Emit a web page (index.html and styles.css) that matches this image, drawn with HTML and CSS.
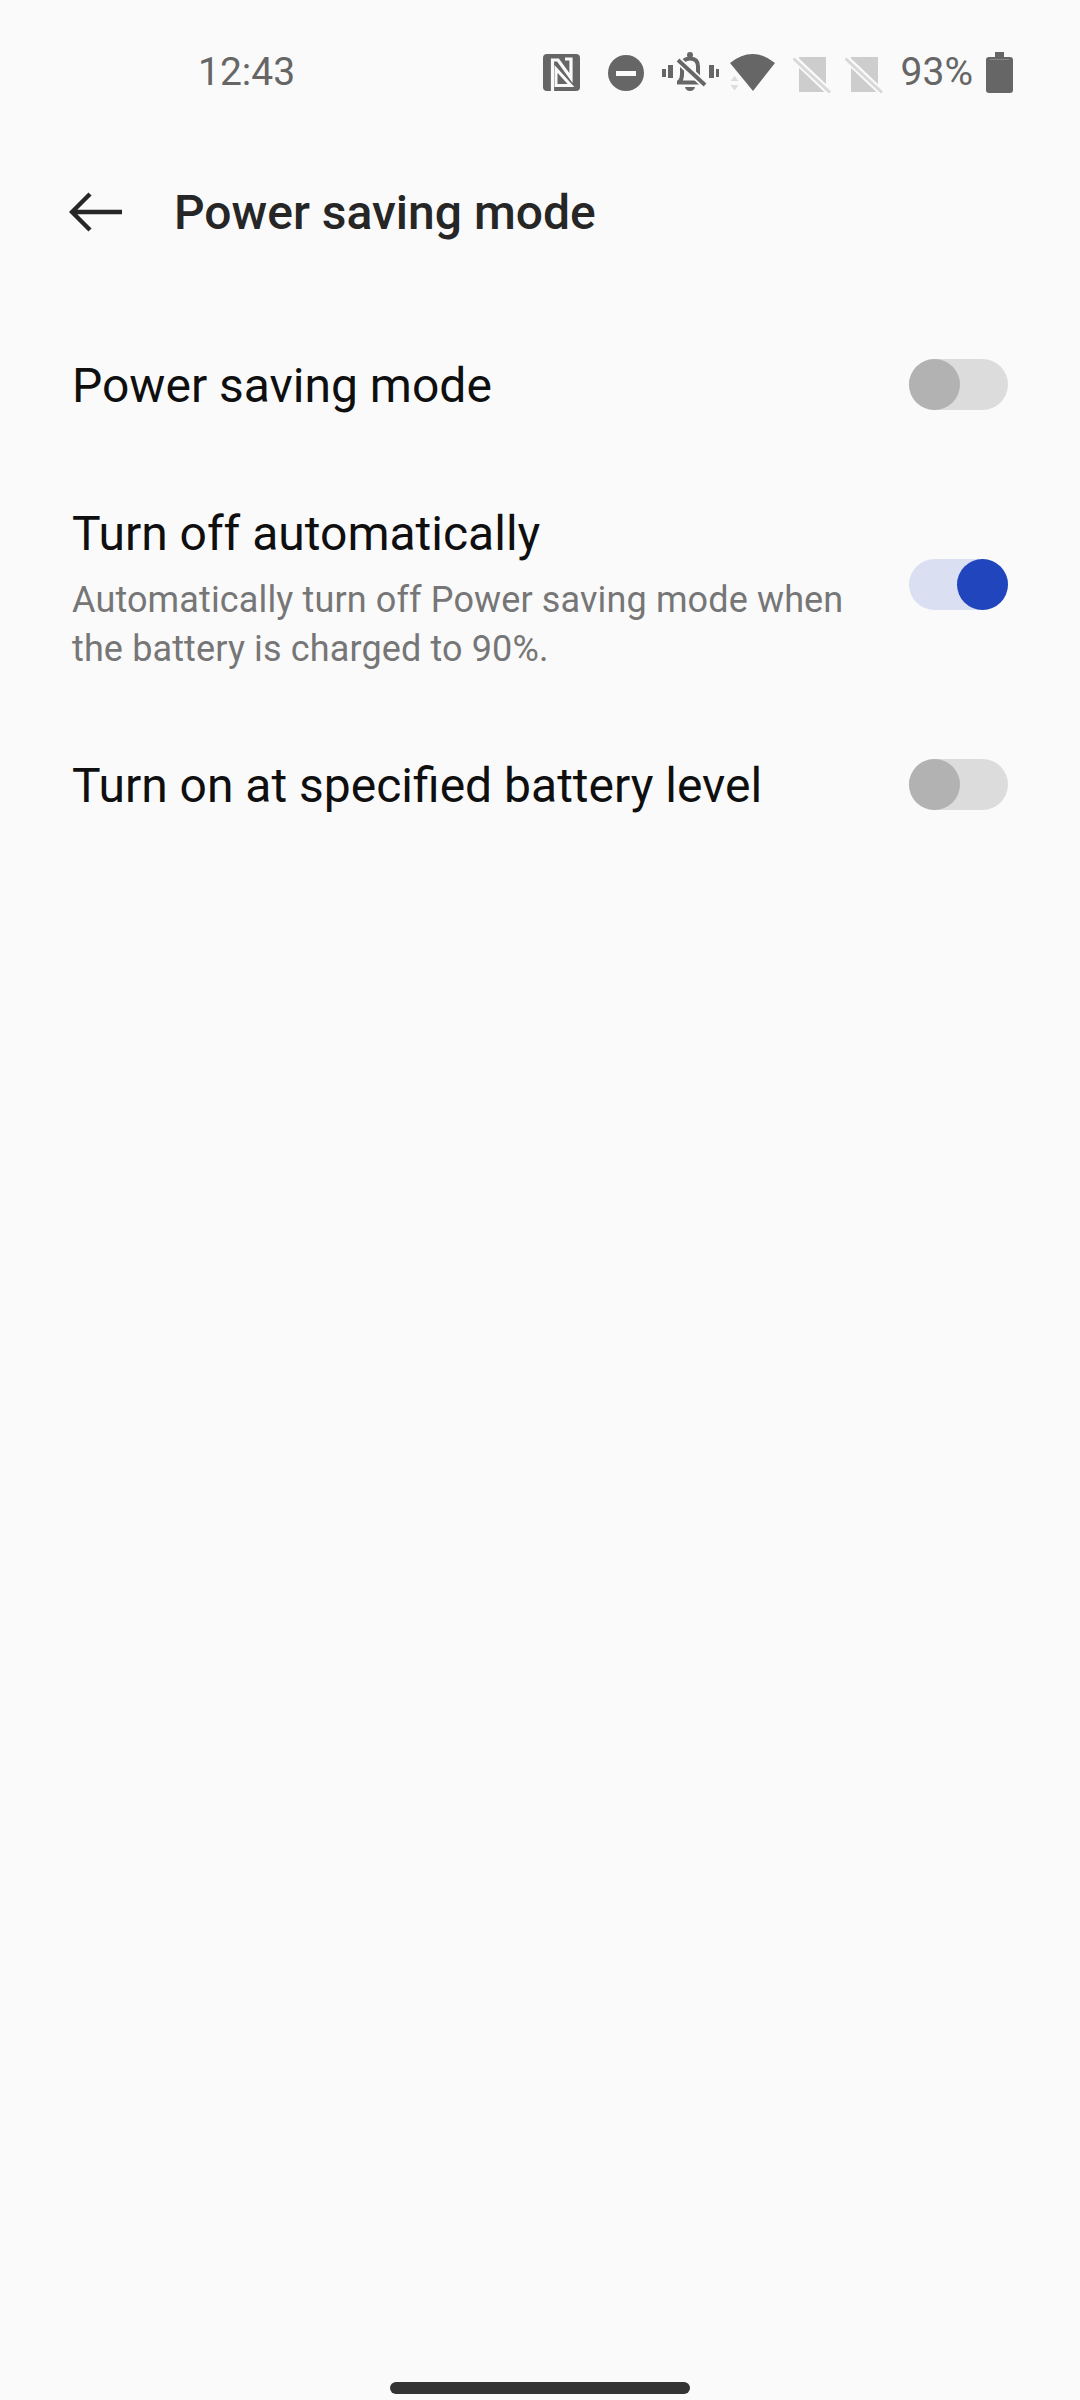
FILE: index.html
```html
<!DOCTYPE html>
<html lang="en">
<head>
<meta charset="utf-8">
<title>Power saving mode</title>
<link rel="stylesheet" href="styles.css">
</head>
<body>
<div class="screen">
  <header class="status">
    <span class="time">12:43</span>
    <div class="status-icons">
      <svg class="ic nfc" viewBox="0 -2 37 42"><rect width="37" height="37" rx="4" fill="#666"/><path d="M9.500 37V6H15L28 24V5H22" fill="none" stroke="#fafafa" stroke-width="3.200"/><path d="M13 15V31.500H28Z" fill="none" stroke="#fafafa" stroke-width="3"/></svg>
      <svg class="ic dnd" viewBox="0 -3 36 42"><circle cx="18" cy="18" r="18" fill="#666"/><rect x="8" y="16" width="20" height="5" fill="#fafafa"/></svg>
      <svg class="ic bell" viewBox="0 0 57 42"><g fill="#666"><rect x="0" y="17" width="4" height="8"/><rect x="6" y="13" width="5" height="13"/><rect x="47" y="13" width="5" height="13"/><rect x="54" y="17" width="3" height="8"/><path d="M23 35h10q-1 4-5 4t-5-4z"/><circle cx="28" cy="3" r="3"/></g><path d="M15 30.500h2q3-3 3-8v-8q0-8 8-8t8 8v8q0 5 5 8h1H15" fill="none" stroke="#666" stroke-width="4"/><path d="M16 8L43 33" stroke="#fafafa" stroke-width="7.500"/><path d="M16 8L43 33" stroke="#666" stroke-width="3.800"/></svg>
      <svg class="ic wifi" viewBox="0 -2 45 42"><path fill="#666" d="M0 9Q22.500-9 45 9L23 37Z"/><path fill="#dcdcdc" d="M0.500 27L4.500 22L8.500 27ZM0.500 31L4.500 36.500L8.500 31Z"/></svg>
      <svg class="ic sim" viewBox="0 -4 38 42"><path fill="#cdcdcd" d="M6 1H33V36H6Z"/><path d="M0 1.500L37 36.500" stroke="#fafafa" stroke-width="7"/><path d="M0.500 2.500L37 36.500" stroke="#d8d8d8" stroke-width="3"/></svg>
      <svg class="ic sim sim-last" viewBox="0 -4 38 42"><path fill="#cdcdcd" d="M6 1H33V36H6Z"/><path d="M0 1.500L37 36.500" stroke="#fafafa" stroke-width="7"/><path d="M0.500 2.500L37 36.500" stroke="#d8d8d8" stroke-width="3"/></svg>
      <span class="pct">93%</span>
      <svg class="ic batt" viewBox="0 0 27 42"><path fill="#666" d="M9 0H18V5H24Q27 5 27 8V38Q27 41 24 41H3Q0 41 0 38V8Q0 5 3 5H9Z"/><rect x="4" y="7" width="19" height="1" fill="#888"/></svg>
    </div>
  </header>

  <nav class="appbar">
    <svg class="back" viewBox="0 0 54 40"><path d="M53 20H3M21 2L3 20L21 38" fill="none" stroke="#262626" stroke-width="4.400"/></svg>
    <h1 class="title">Power saving mode</h1>
  </nav>

  <main class="list">
    <div class="row row-single">
      <div class="text"><div class="label">Power saving mode</div></div>
      <div class="toggle"><span class="knob"></span></div>
    </div>
    <div class="row row-double">
      <div class="text text-double">
        <div class="label">Turn off automatically</div>
        <div class="sub">Automatically turn off Power saving mode when the battery is charged to 90%.</div>
      </div>
      <div class="toggle on"><span class="knob"></span></div>
    </div>
    <div class="row row-single">
      <div class="text"><div class="label">Turn on at specified battery level</div></div>
      <div class="toggle"><span class="knob"></span></div>
    </div>
  </main>

  <div class="home-bar"></div>
</div>
</body>
</html>
```

FILE: styles.css
```css
* { box-sizing: border-box; }
html, body { margin: 0; padding: 0; }
body { background: #fafafa; font-family: Roboto, "Noto Sans", sans-serif; }
.screen { width: 1080px; height: 2400px; display: flex; flex-direction: column; background: #fafafa; }

.status { height: 176px; flex: none; display: flex; justify-content: space-between; align-items: flex-start; padding: 51px 67px 0 198px; }
.time { font-size: 39px; line-height: 42px; color: #666; }
.status-icons { display: flex; align-items: flex-start; height: 42px; margin-top: 1px; }
.ic { display: block; flex: none; height: 42px; }
.nfc { width: 37px; margin-right: 28px; }
.dnd { width: 36px; margin-right: 18px; }
.bell { width: 57px; margin-right: 11px; }
.wifi { width: 45px; margin-right: 18px; }
.sim { width: 38px; margin-right: 14px; }
.sim-last { margin-right: 18px; }
.pct { font-size: 39px; line-height: 42px; color: #666; margin-right: 13px; margin-top: -1px; }
.batt { width: 27px; }

.appbar { height: 72px; flex: none; display: flex; align-items: center; padding-left: 69px; gap: 51px; }
.back { width: 54px; height: 40px; flex: none; }
.title { margin: 0; padding-top: 2px; font-size: 48px; font-weight: 500; color: #262626; line-height: 70px; }

.list { flex: 1; padding: 111px 72px 0; display: flex; flex-direction: column; }
.row { display: flex; justify-content: space-between; align-items: center; }
.row-single { height: 51px; }
.row-single .text { padding-top: 3px; }
.row-double { height: 177px; margin: 86px 0; }
.text { width: 790px; }
.text-double { padding-top: 8px; align-self: flex-start; }
.label { font-size: 48px; line-height: 60px; color: #0f0f0f; }
.sub { font-size: 36px; line-height: 49px; letter-spacing: 0.13px; color: #767676; margin-top: 12px; }

.toggle { width: 99px; height: 51px; border-radius: 26px; background: #dcdcdc; flex: none; position: relative; }
.knob { position: absolute; left: 0; top: 0; width: 51px; height: 51px; border-radius: 50%; background: #b2b2b2; }
.toggle.on { background: #dbdff2; }
.toggle.on .knob { left: 48px; background: #2045bd; }

.home-bar { width: 300px; height: 12px; border-radius: 6px; background: #333; margin: 0 auto 6px; flex: none; }
```
